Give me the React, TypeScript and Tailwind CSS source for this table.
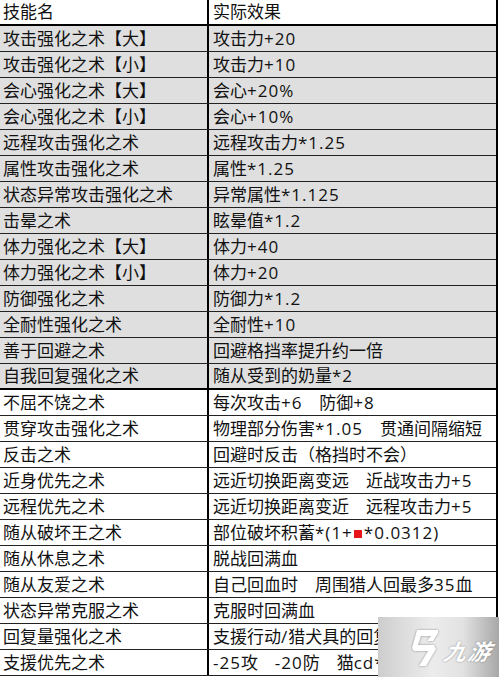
import React from "react";

function L({ t }: { t: string }) {
  const parts = t.split(/([\x20-\x7E]+)/);
  return (
    <>
      {parts.map((p, i) =>
        /^[\x20-\x7E]+$/.test(p) ? (
          <span key={i} className="tracking-[1px] [word-spacing:11.5px]">
            {p}
          </span>
        ) : (
          <React.Fragment key={i}>{p}</React.Fragment>
        )
      )}
    </>
  );
}

const rows: [string, React.ReactNode][] = [
  ["攻击强化之术【大】", <L t="攻击力+20" />],
  ["攻击强化之术【小】", <L t="攻击力+10" />],
  ["会心强化之术【大】", <L t="会心+20%" />],
  ["会心强化之术【小】", <L t="会心+10%" />],
  ["远程攻击强化之术", <L t="远程攻击力*1.25" />],
  ["属性攻击强化之术", <L t="属性*1.25" />],
  ["状态异常攻击强化之术", <L t="异常属性*1.125" />],
  ["击晕之术", <L t="眩晕值*1.2" />],
  ["体力强化之术【大】", <L t="体力+40" />],
  ["体力强化之术【小】", <L t="体力+20" />],
  ["防御强化之术", <L t="防御力*1.2" />],
  ["全耐性强化之术", <L t="全耐性+10" />],
  ["善于回避之术", "回避格挡率提升约一倍"],
  ["自我回复强化之术", <L t="随从受到的奶量*2" />],
  ["不屈不饶之术", <L t="每次攻击+6 防御+8" />],
  ["贯穿攻击强化之术", <L t="物理部分伤害*1.05 贯通间隔缩短" />],
  ["反击之术", "回避时反击（格挡时不会）"],
  ["近身优先之术", <L t="远近切换距离变远 近战攻击力+5" />],
  ["远程优先之术", <L t="远近切换距离变近 远程攻击力+5" />],
  [
    "随从破坏王之术",
    <>
      <L t="部位破坏积蓄*(1+" />
      <span className="inline-block w-[8px] h-[8px] bg-[#e8141b] ml-[1px] mr-[2px] align-[1px]" />
      <L t="*0.0312)" />
    </>,
  ],
  ["随从休息之术", "脱战回满血"],
  ["随从友爱之术", <L t="自己回血时 周围猎人回最多35血" />],
  ["状态异常克服之术", "克服时回满血"],
  ["回复量强化之术", <L t="支援行动/猎犬具的回复量提升" />],
  ["支援优先之术", <L t="-25攻 -20防 猫cd*0.5" />],
];

export default function App() {
  return (
    <div
      className="relative w-[499px] h-[677px] overflow-hidden bg-white text-[#111] text-[17px]"
      style={{ fontFamily: '"Open Sans", "Noto Sans CJK SC", sans-serif' }}
    >
      <div className="w-[498px] border-r-2 border-black">
        <div className="flex h-[26px] border-b-2 border-black bg-white">
          <div className="w-[209px] shrink-0 border-r-2 border-black pl-[3px] leading-[24px] whitespace-nowrap">
            技能名
          </div>
          <div className="flex-1 pl-[4px] leading-[24px] whitespace-nowrap overflow-hidden">实际效果</div>
        </div>
        {rows.map(([a, b], i) => {
          const grey = i < 14;
          const thick = i === 13;
          return (
            <div
              key={i}
              className={`flex h-[26px] ${thick ? "border-b-2 border-black" : "border-b border-[#222]"} ${
                grey ? "bg-[#dfdfdf]" : "bg-white"
              }`}
            >
              <div
                className={`w-[209px] shrink-0 border-r-2 border-black pl-[3px] whitespace-nowrap ${
                  thick ? "leading-[24px]" : "leading-[25px]"
                }`}
              >
                {a}
              </div>
              <div
                className={`flex-1 pl-[4px] whitespace-nowrap overflow-hidden ${
                  thick ? "leading-[24px]" : "leading-[25px]"
                }`}
              >
                {b}
              </div>
            </div>
          );
        })}
      </div>

      <div className="absolute left-[378px] top-[617px] w-[121px] h-[60px] bg-[linear-gradient(90deg,#cdcdcd_0%,#dcdcdc_20%,#ececec_45%,#e2e2e2_70%,#a8a8a8_100%)] flex items-center pl-[31px] gap-[6px]">
        <svg width="30" height="40" viewBox="0 0 30 40" className="shrink-0 mt-[1px] drop-shadow-[0_0_1px_rgba(0,0,0,0.4)]">
          <path
            d="M8 2 L29 2 L29 5 L24 13 L18 13 L22 8 L12 8 L9 17 L25 17 L27 21 L17 38 L10 38 L19 23 L5 23 L3 20 Z"
            fill="#ffffff"
          />
        </svg>
        <span
          className="text-white italic font-bold text-[22px] leading-none tracking-[2px] mt-[6px] -skew-x-12"
          style={{ textShadow: "0 0 2px rgba(0,0,0,0.4)", fontFamily: '"Noto Sans CJK SC", sans-serif' }}
        >
          九游
        </span>
      </div>
    </div>
  );
}
